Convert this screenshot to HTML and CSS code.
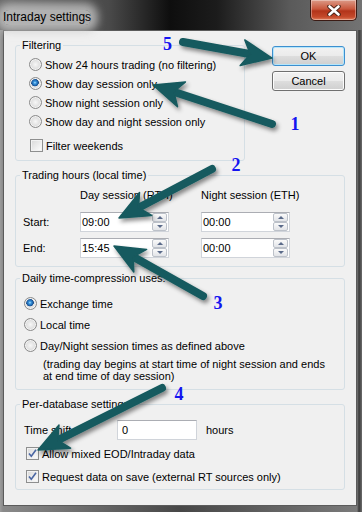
FILE: index.html
```html
<!DOCTYPE html>
<html lang="en">
<head>
  <meta charset="UTF-8">
  <title>Intraday settings</title>
  <link rel="stylesheet" href="styles.css">
</head>
<body>
  <div class="window">
    <div class="titlebar">
      <span class="title">Intraday settings</span>
      <span class="close">
        <svg width="14" height="11" viewBox="0 0 14 11">
          <path d="M2.5 1.5 L11.5 9.5 M11.5 1.5 L2.5 9.5" stroke="#4a2418" stroke-width="4.5" stroke-linecap="round"/>
          <path d="M2.5 1.5 L11.5 9.5 M11.5 1.5 L2.5 9.5" stroke="#fff" stroke-width="2.6" stroke-linecap="round"/>
        </svg>
      </span>
    </div>

    <div class="client">
      <div class="top-row">
        <fieldset class="group filtering">
          <legend>Filtering</legend>
          <div class="body">
            <label class="opt"><span class="radio"></span>Show 24 hours trading (no filtering)</label>
            <label class="opt"><span class="radio on"></span>Show day session only</label>
            <label class="opt"><span class="radio"></span>Show night session only</label>
            <label class="opt"><span class="radio"></span>Show day and night session only</label>
            <label class="opt check-row"><span class="check"></span>Filter weekends</label>
          </div>
        </fieldset>
        <div class="buttons">
          <button class="btn default">OK</button>
          <button class="btn">Cancel</button>
        </div>
      </div>

      <fieldset class="group hours">
        <legend>Trading hours (local time)</legend>
        <div class="hours-grid">
          <span></span>
          <span class="col-head">Day session (RTH)</span>
          <span class="col-head">Night session (ETH)</span>

          <span class="row-label">Start:</span>
          <div class="spin-box"><span class="value">09:00</span><span class="spin"><span class="up"></span><span class="down"></span></span></div>
          <div class="spin-box"><span class="value">00:00</span><span class="spin"><span class="up"></span><span class="down"></span></span></div>

          <span class="row-label">End:</span>
          <div class="spin-box"><span class="value">15:45</span><span class="spin"><span class="up"></span><span class="down"></span></span></div>
          <div class="spin-box"><span class="value">00:00</span><span class="spin"><span class="up"></span><span class="down"></span></span></div>
        </div>
      </fieldset>

      <fieldset class="group daily">
        <legend>Daily time-compression uses:</legend>
        <div class="body">
          <label class="opt"><span class="radio on"></span>Exchange time</label>
          <label class="opt"><span class="radio"></span>Local time</label>
          <label class="opt"><span class="radio"></span>Day/Night session times as defined above</label>
          <p class="desc">(trading day begins at start time of night session and ends<br>at end time of day session)</p>
        </div>
      </fieldset>

      <fieldset class="group database">
        <legend>Per-database settings</legend>
        <div class="body">
          <div class="shift-row">
            <span class="shift-label">Time shift</span>
            <span class="text-box">0</span>
            <span class="unit">hours</span>
          </div>
          <label class="opt check-row"><span class="check"><svg width="11" height="11" viewBox="0 0 11 11"><path d="M2 5.5 L4.3 8.3 L9 1.8" fill="none" stroke="#4a66a3" stroke-width="1.6"/></svg></span>Allow mixed EOD/Intraday data</label>
          <label class="opt check-row"><span class="check"><svg width="11" height="11" viewBox="0 0 11 11"><path d="M2 5.5 L4.3 8.3 L9 1.8" fill="none" stroke="#4a66a3" stroke-width="1.6"/></svg></span>Request data on save (external RT sources only)</label>
        </div>
      </fieldset>
    </div>

    <!-- callouts drawn on top of the screenshot -->
    <svg class="annotations" width="362" height="512" viewBox="0 0 362 512">
      <defs>
        <filter id="shadow" x="-30%" y="-30%" width="160%" height="160%">
          <feDropShadow dx="2" dy="3" stdDeviation="2" flood-color="#000" flood-opacity="0.45"/>
        </filter>
      </defs>
      <g class="arrows" filter="url(#shadow)">
        <line x1="183" y1="42" x2="252.3" y2="54.5"/>
        <polygon points="272,58 240.2,65.5 250.4,54.1 244.8,39.9"/>
        <line x1="272" y1="124" x2="172" y2="91.2"/>
        <polygon points="153,85 185.5,81.9 173.9,91.8 177.5,106.7"/>
        <line x1="212" y1="169" x2="136.7" y2="208.7"/>
        <polygon points="119,218 139.5,192.5 138.5,207.7 151.7,215.5"/>
        <line x1="203" y1="296" x2="131.4" y2="255.8"/>
        <polygon points="114,246 146.6,249.4 133.2,256.8 133.8,272"/>
        <line x1="162" y1="388" x2="55.9" y2="441.1"/>
        <polygon points="38,450 59,425 57.7,440.2 70.6,448.2"/>
      </g>
      <g class="marks">
        <text x="167.5" y="50">5</text>
        <text x="295" y="130">1</text>
        <text x="236" y="171">2</text>
        <text x="218" y="309">3</text>
        <text x="179" y="400">4</text>
      </g>
    </svg>
  </div>
</body>
</html>
```

FILE: styles.css
```css
* { box-sizing: border-box; }
body { margin: 0; background: #2e2e2e; font-family: "Liberation Sans", Arial, sans-serif; font-size: 11px; color: #000; }

.window { position: relative; width: 362px; height: 512px; overflow: hidden;
  background: linear-gradient(90deg, #9c9c9c 0, #8a8a8a 3px, #474747 50%, #7a7a7a 357px, #3a3a3a 359px, #6c6c6c 362px); }

.titlebar { height: 30px; display: flex; justify-content: space-between; align-items: flex-start;
  background: linear-gradient(90deg, #686868 0, #4a4a4a 30%, #0e0e0e 47%, #1c1c1c 60%, #5a5a5a 80%, #737373 100%); }
.title { margin: 10px 0 0 3px; font-size: 12px; line-height: 15px; background: rgba(205, 205, 205, .75);
  box-shadow: 0 0 9px 7px rgba(205, 205, 205, .75); border-radius: 6px; }
.close { width: 47px; height: 21px; margin-right: 5px; display: flex; align-items: center; justify-content: center;
  border: 1px solid #3b1b14; border-top: 0; border-radius: 0 0 5px 5px;
  background: linear-gradient(#dc9a87 0, #c9573c 45%, #b2341a 55%, #c54a2b 85%, #e0805f 100%);
  box-shadow: inset 0 0 0 1px rgba(255, 255, 255, .35); }

.client { margin-left: 3px; width: 354px; height: 476px; border: 1px solid #5b5b5b; background: #f0f0f0; padding: 8px 11px 0; }

.top-row { display: flex; align-items: flex-start; }

.group { margin: 0; padding: 0; min-width: 0; border: 1px solid #d5dfe5; border-radius: 3px; }
.group legend { margin-left: 4px; padding: 0 2px; line-height: 13px; }

.opt { display: flex; align-items: center; height: 19px; white-space: nowrap; }
.radio { flex: none; width: 13px; height: 13px; margin-right: 3px; border-radius: 50%; border: 1px solid #8a8a8a;
  background: radial-gradient(circle at 50% 50%, #f7f7f7 0, #e4e4e4 45%, #cacaca 100%);
  box-shadow: inset 0 0 0 1px #f4f4f4; }
.radio.on { background: radial-gradient(circle at 45% 42%, #b9e4ff 0, #3d9ae0 1.2px, #1b5fa8 3px, #1f4e85 3.6px, rgba(0, 0, 0, 0) 4px),
  radial-gradient(circle at 50% 50%, #f7f7f7 0, #e4e4e4 45%, #cacaca 100%); }
.check { flex: none; width: 13px; height: 13px; margin-right: 3px; border: 1px solid #8e8f8f; display: flex; align-items: center; justify-content: center;
  background: linear-gradient(135deg, #d8d8d8, #fefefe); box-shadow: inset 0 0 0 1px #f2f2f2; }

/* filtering */
.filtering { width: 230px; height: 122px; }
.filtering .body { padding: 3px 0 0 13px; }
.filtering .check-row { margin-top: 5px; padding-left: 1px; }

.buttons { margin: 7px 0 0 auto; display: flex; flex-direction: column; gap: 5px; }
.btn { width: 73px; height: 20px; padding: 0; border: 1px solid #707070; border-radius: 3px; color: #000;
  font: 11px "Liberation Sans", Arial, sans-serif;
  background: linear-gradient(#f2f2f2 0, #ebebeb 48%, #dddddd 52%, #cfcfcf 100%); box-shadow: inset 0 0 0 1px #fcfcfc; }
.btn.default { border-color: #3c8fcf; box-shadow: inset 0 0 0 1px #b5e6fb; }

/* trading hours */
.hours { margin-top: 8px; height: 98px; }
.hours-grid { display: grid; grid-template-columns: 57px 121px 89px; grid-template-rows: 18px 20px 20px; row-gap: 6px; padding: 6px 0 0 7px; }
.col-head { line-height: 14px; white-space: nowrap; }
.row-label { align-self: center; }
.spin-box { display: flex; align-items: center; width: 89px; height: 20px; padding-left: 1px; background: #fff;
  border: 1px solid #d0d4da; border-top-color: #abadb3; }
.spin-box .value { flex: 1; }
.spin { display: flex; flex-direction: column; width: 15px; height: 18px; margin-right: 1px; }
.spin span { flex: 1; display: flex; align-items: center; justify-content: center; border: 1px solid #bcc1c9; border-radius: 2px;
  background: linear-gradient(#fafafa, #e2e4e8); }
.spin .up::after { content: ""; border-left: 3px solid transparent; border-right: 3px solid transparent; border-bottom: 3px solid #5b6b8a; }
.spin .down::after { content: ""; border-left: 3px solid transparent; border-right: 3px solid transparent; border-top: 3px solid #5b6b8a; }

/* daily compression */
.daily { margin-top: 5px; height: 118px; }
.daily .body { padding: 8px 0 0 8px; }
.daily .opt { height: 21px; }
.desc { margin: 2px 0 0; padding-left: 19px; line-height: 12px; }

/* per database */
.database { margin-top: 8px; height: 92px; }
.database .body { padding: 9px 0 0 8px; }
.shift-row { display: flex; align-items: center; height: 20px; }
.shift-label { width: 93px; }
.text-box { width: 80px; height: 20px; line-height: 18px; padding-left: 4px; background: #fff; border: 1px solid #d0d4da; border-top-color: #abadb3; }
.unit { margin-left: 9px; }
.database .check-row { margin-top: 4px; padding-left: 2px; }

.annotations { position: absolute; left: 0; top: 0; pointer-events: none; }
.arrows line { stroke: #175a5e; stroke-width: 8; stroke-linecap: round; }
.arrows polygon { fill: #175a5e; stroke: #175a5e; stroke-width: 1.5; stroke-linejoin: round; }
.marks text { font-family: "Liberation Serif", "Times New Roman", serif; font-weight: bold; font-size: 18px; fill: #1414f0; text-anchor: middle; }
```
